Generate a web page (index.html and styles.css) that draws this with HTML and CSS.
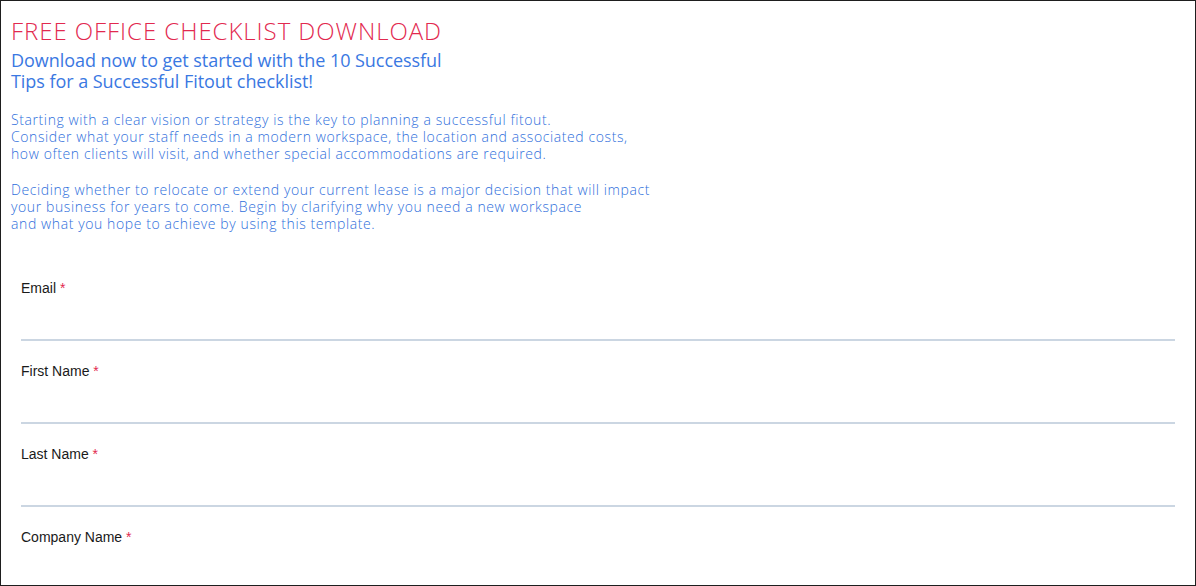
FILE: index.html
```html
<!DOCTYPE html>
<html>
<head>
  <meta charset="UTF-8">
  <title>Free Office Checklist Download</title>
  <link rel="stylesheet" href="styles.css">
</head>
<body>
<div class="frame">
  <div class="intro">
    <h1>FREE OFFICE CHECKLIST DOWNLOAD</h1>
    <h2>Download now to get started with the 10 Successful<br>Tips for a Successful Fitout checklist!</h2>
    <p>Starting with a clear vision or strategy is the key to planning a successful fitout.<br>
      Consider what your staff needs in a modern workspace, the location and associated costs,<br>
      how often clients will visit, and whether special accommodations are required.</p>
    <p>Deciding whether to relocate or extend your current lease is a major decision that will impact<br>
      your business for years to come. Begin by clarifying why you need a new workspace<br>
      and what you hope to achieve by using this template.</p>
  </div>

  <form class="signup">
    <div class="field">
      <label for="email">Email <span class="req">*</span></label>
      <input type="email" id="email" />
    </div>
    <div class="field">
      <label for="first">First Name <span class="req">*</span></label>
      <input type="text" id="first" />
    </div>
    <div class="field">
      <label for="last">Last Name <span class="req">*</span></label>
      <input type="text" id="last" />
    </div>
    <div class="field">
      <label for="company">Company Name <span class="req">*</span></label>
      <input type="text" id="company" />
    </div>
  </form>
</div>
</body>
</html>
```

FILE: styles.css
```css
html, body {
  margin: 0;
  padding: 0;
  height: 100%;
  overflow: hidden;
  background-color: #fff;
}

.frame {
  box-sizing: border-box;
  height: 586px;
  border: 1px solid #1e1e1e;
  overflow: hidden;
}

.intro {
  padding: 16px 10px 0 10px;
  font-family: "Open Sans", sans-serif;
}

h1 {
  margin: 0;
  font-size: 24px;
  font-weight: 300;
  line-height: 28px;
  letter-spacing: 0.95px;
  color: #e2294f;
}

h2 {
  margin: 5px 0 0 0;
  font-size: 18px;
  font-weight: 500;
  line-height: 21px;
  letter-spacing: -0.05px;
  color: #3a78e2;
}

p {
  margin: 19px 0 0 0;
  font-size: 14px;
  font-weight: 300;
  line-height: 17px;
  letter-spacing: 0.6px;
  color: #2f6fdc;
}

.signup {
  padding: 48px 20px 0 20px;
}

.field {
  display: flex;
  flex-direction: column;
  margin-bottom: 22px;
}

label {
  font-family: "Liberation Sans", Arial, sans-serif;
  font-size: 14px;
  line-height: 16px;
  color: #1a1a1a;
}

.req {
  color: #e2294f;
}

input[type="text"],
input[type="email"] {
  box-sizing: border-box;
  height: 33px;
  margin-top: 12px;
  padding: 0;
  border: none;
  border-bottom: 2px solid #cbd6e2;
  outline: none;
  background: transparent;
}
```
